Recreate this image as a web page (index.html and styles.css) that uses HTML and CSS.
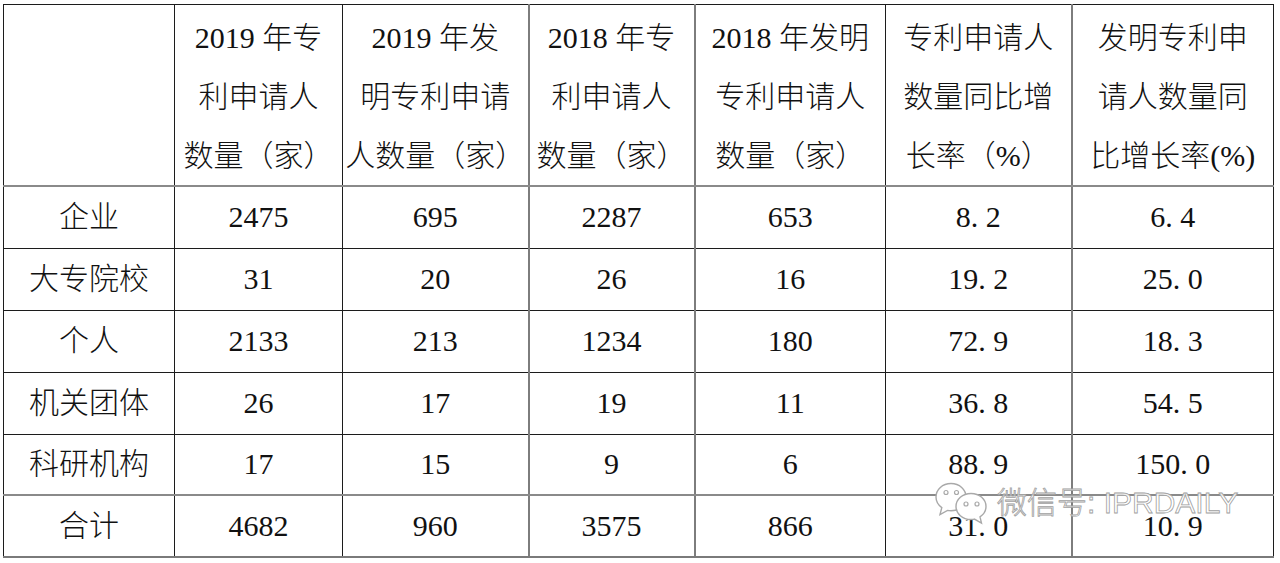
FILE: index.html
```html
<!DOCTYPE html>
<html lang="zh-CN">
<head>
<meta charset="utf-8">
<title>专利申请人数量</title>
<link rel="stylesheet" href="styles.css">
</head>
<body>
<div class="page">
  <table class="grid">
    <colgroup>
      <col class="c1"><col class="c2"><col class="c3"><col class="c4"><col class="c5"><col class="c6"><col class="c7">
    </colgroup>
    <thead>
      <tr class="head">
        <th></th>
        <th>2019 年专<br>利申请人<br>数量（家）</th>
        <th>2019 年发<br>明专利申请<br>人数量（家）</th>
        <th>2018 年专<br>利申请人<br>数量（家）</th>
        <th>2018 年发明<br>专利申请人<br>数量（家）</th>
        <th>专利申请人<br>数量同比增<br>长率（%）</th>
        <th>发明专利申<br>请人数量同<br>比增长率(%)</th>
      </tr>
    </thead>
    <tbody>
      <tr class="r1"><td>企业</td><td>2475</td><td>695</td><td>2287</td><td>653</td><td>8<span class="pt">.</span>2</td><td>6<span class="pt">.</span>4</td></tr>
      <tr class="r2"><td>大专院校</td><td>31</td><td>20</td><td>26</td><td>16</td><td>19<span class="pt">.</span>2</td><td>25<span class="pt">.</span>0</td></tr>
      <tr class="r3"><td>个人</td><td>2133</td><td>213</td><td>1234</td><td>180</td><td>72<span class="pt">.</span>9</td><td>18<span class="pt">.</span>3</td></tr>
      <tr class="r4"><td>机关团体</td><td>26</td><td>17</td><td>19</td><td>11</td><td>36<span class="pt">.</span>8</td><td>54<span class="pt">.</span>5</td></tr>
      <tr class="r5"><td>科研机构</td><td>17</td><td>15</td><td>9</td><td>6</td><td>88<span class="pt">.</span>9</td><td>150<span class="pt">.</span>0</td></tr>
      <tr class="r6"><td>合计</td><td>4682</td><td>960</td><td>3575</td><td>866</td><td>31<span class="pt">.</span>0</td><td>10<span class="pt">.</span>9</td></tr>
    </tbody>
  </table>

  <div class="watermark">
    <svg class="wx" width="56" height="44" viewBox="0 0 56 44">
      <path d="M16 1.5 C7.5 1.5 1 7.5 1 15 C1 19.5 3.2 23 6.8 25.6 L5 32.5 L12.5 28.4 C13.6 28.7 14.8 28.8 16 28.8 C24.5 28.8 31 22.7 31 15 C31 7.5 24.5 1.5 16 1.5 Z" fill="#fff" stroke="#a9a9a9" stroke-width="1.4"/>
      <circle cx="11" cy="10.5" r="2" fill="none" stroke="#a9a9a9" stroke-width="1.2"/>
      <circle cx="21.5" cy="10.5" r="2" fill="none" stroke="#a9a9a9" stroke-width="1.2"/>
      <path d="M36 11.5 C27.5 11.5 21 17.3 21 24.5 C21 31.7 27.5 37.5 36 37.5 C37.2 37.5 38.3 37.4 39.4 37.1 L46.5 41 L45 34.8 C48.8 32.4 51 28.7 51 24.5 C51 17.3 44.5 11.5 36 11.5 Z" fill="#fff" stroke="#a9a9a9" stroke-width="1.4"/>
      <circle cx="31" cy="22" r="2" fill="none" stroke="#a9a9a9" stroke-width="1.2"/>
      <circle cx="42" cy="22" r="2" fill="none" stroke="#a9a9a9" stroke-width="1.2"/>
    </svg>
    <span class="wm-text">微信号: IPRDAILY</span>
  </div>
</div>
</body>
</html>
```

FILE: styles.css
```css
html, body {
  margin: 0;
  padding: 0;
  background: #fff;
}

.page {
  position: relative;
  width: 1280px;
  height: 563px;
  padding: 4px 0 0 3px;
  box-sizing: border-box;
  overflow: hidden;
}

.grid {
  border-collapse: collapse;
  table-layout: fixed;
  width: 1270px;
  font-family: "Liberation Serif", "Noto Sans CJK SC", serif;
  font-size: 30px;
  font-weight: 300;
  color: #111;
  border: 1px solid #222;
}

.c1 { width: 171px; }
.c2 { width: 168px; }
.c3 { width: 186px; }
.c4 { width: 166px; }
.c5 { width: 191px; }
.c6 { width: 186px; }
.c7 { width: 202px; }

.grid th,
.grid td {
  border: 1px solid #1c1c1c;
  padding: 0;
  text-align: center;
  vertical-align: middle;
  font-weight: 300;
  white-space: nowrap;
}

.grid th:nth-child(4), .grid td:nth-child(4),
.grid th:nth-child(5), .grid td:nth-child(5),
.grid th:nth-child(7), .grid td:nth-child(7) {
  border-left: 2px solid #7d7d7d;
}

.head {
  height: 181px;
}

.head th {
  line-height: 59px;
  padding-top: 3px;
  padding-bottom: 0;
  border-bottom: 2px solid #8a8a8a;
}

.grid tbody tr { height: 62px; }
.grid tbody tr.r5 { height: 61px; }

.grid td {
  line-height: 30px;
}

.r5 td { border-bottom: 2px solid #8a8a8a; }
.r6 td { border-bottom: 2px solid #7a7a7a; }

.pt {
  display: inline-block;
  width: 0.5em;
  text-align: left;
}

.watermark {
  position: absolute;
  left: 935px;
  top: 482px;
  display: flex;
  align-items: flex-start;
  gap: 6px;
}

.wx {
  display: block;
}

.wm-text {
  margin-top: 4px;
  font-family: "Liberation Sans", "Noto Sans CJK SC", sans-serif;
  font-size: 30px;
  line-height: 34px;
  font-weight: 300;
  color: rgba(255, 255, 255, 0.9);
  -webkit-text-stroke: 0.8px #a0a0a0;
  white-space: nowrap;
}
```
